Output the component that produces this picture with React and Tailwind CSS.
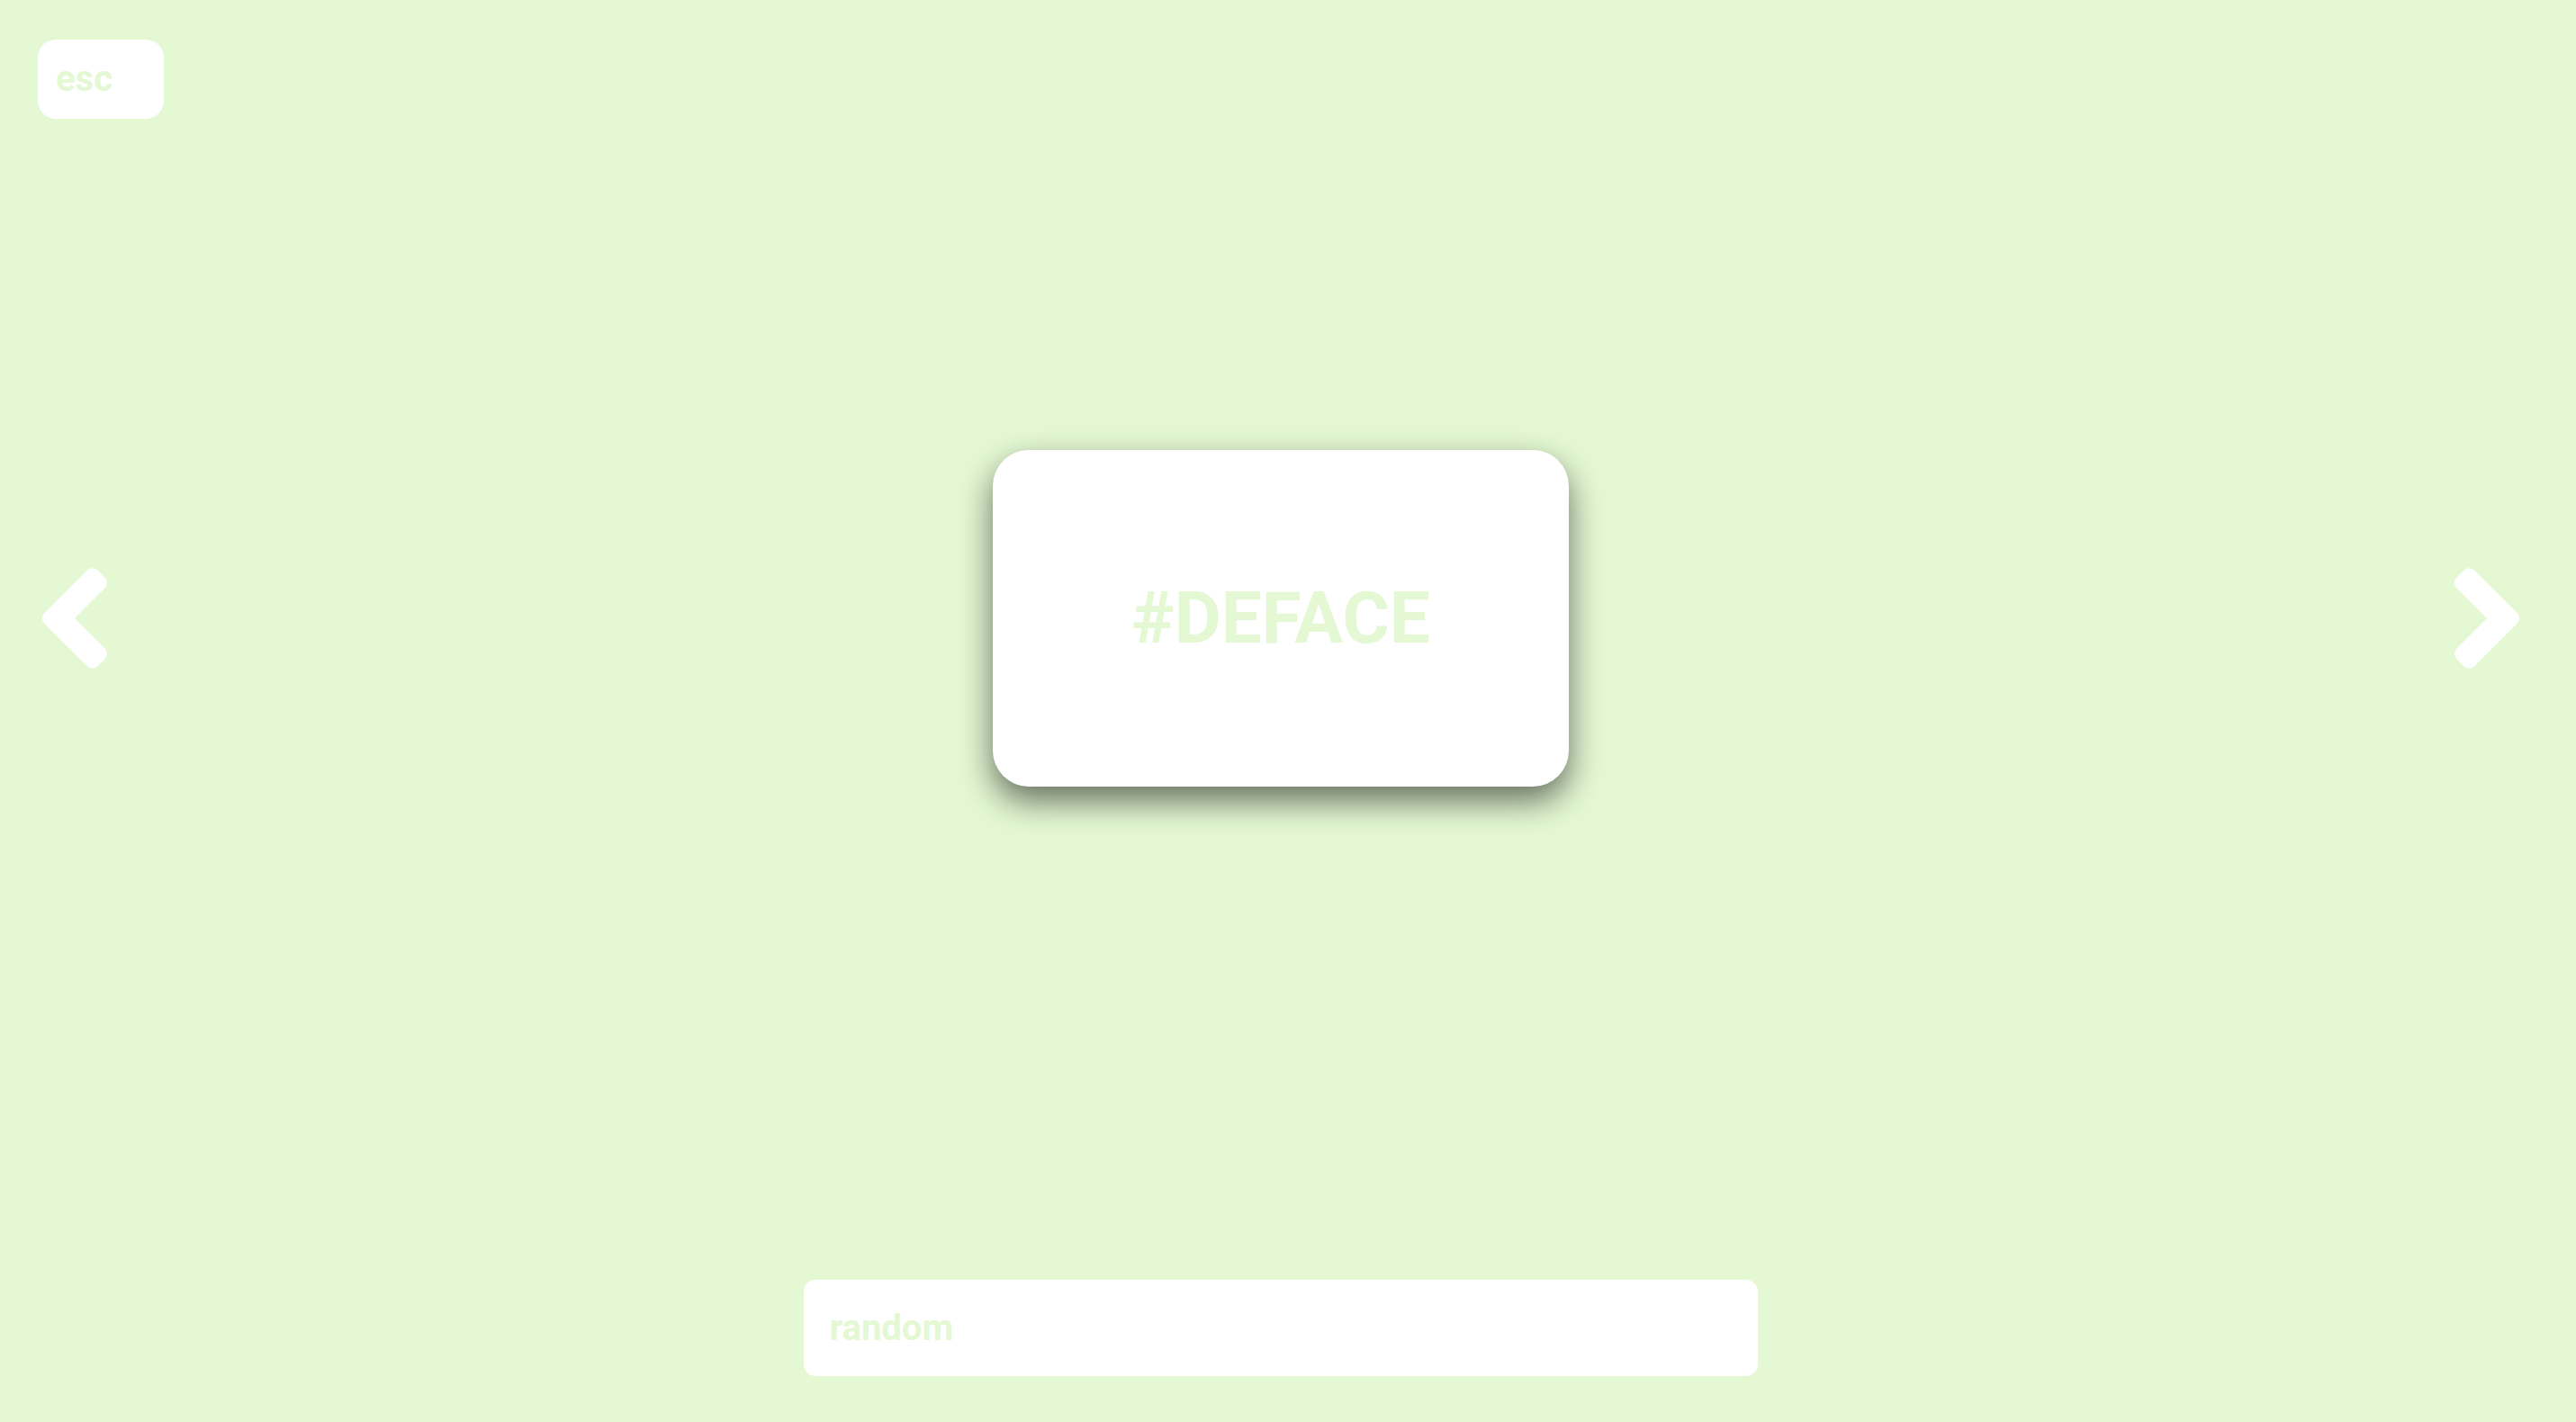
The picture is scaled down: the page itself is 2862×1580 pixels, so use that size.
import React, { useState } from 'react';

// FA5-style "angle" chevrons, viewBox cropped to the ink box
const ChevronLeft = () => (
    <svg viewBox="24.6 96 206.8 320" className="w-[72px] h-[112px] fill-white">
        <path d="M31.7 239l136-136c9.4-9.4 24.6-9.4 33.9 0l22.6 22.6c9.4 9.4 9.4 24.6 0 33.9L127.9 256l96.4 96.4c9.4 9.4 9.4 24.6 0 33.9L201.7 409c-9.4 9.4-24.6 9.4-33.9 0l-136-136c-9.5-9.4-9.5-24.6-.1-34z" />
    </svg>
);

const ChevronRight = () => (
    <svg viewBox="24.6 96 206.8 320" className="w-[72px] h-[112px] fill-white">
        <path d="M224.3 273l-136 136c-9.4 9.4-24.6 9.4-33.9 0l-22.6-22.6c-9.4-9.4-9.4-24.6 0-33.9l96.4-96.4-96.4-96.4c-9.4-9.4-9.4-24.6 0-33.9L54.3 103c9.4-9.4 24.6-9.4 33.9 0l136 136c9.5 9.4 9.5 24.6.1 34z" />
    </svg>
);

const App = () => {
    const [query, setQuery] = useState('random');

    return (
        <div className="h-screen w-full bg-[#e3f8d3] pr-[17px] flex flex-col font-['Roboto',sans-serif] overflow-hidden">
            {/* Header */}
            <div className="h-[132px] pt-[44px] pl-[42px] shrink-0">
                <button className="w-[140px] h-[88px] bg-white rounded-[20px] text-left pl-[20px] text-[40px] font-bold leading-none text-[#e3f8d3]">
                    esc
                </button>
            </div>

            {/* Card + navigation */}
            <div className="flex-1 flex items-center justify-between pl-[47px] pr-[46px]">
                <button><ChevronLeft /></button>
                <div className="w-[640px] h-[374px] bg-white rounded-[40px] shadow-[0_16px_36px_rgba(0,0,0,0.55)] flex items-center justify-center">
                    <span className="text-[80px] font-bold leading-none text-[#e3f8d3]">#DEFACE</span>
                </div>
                <button><ChevronRight /></button>
            </div>

            {/* Search */}
            <div className="mt-[180px] pb-[51px] flex justify-center shrink-0">
                <input
                    value={query}
                    onChange={(e) => setQuery(e.target.value)}
                    className="w-[1060px] h-[107px] bg-white rounded-[13px] pl-[29px] text-[40px] font-bold text-[#e3f8d3] outline-none"
                />
            </div>
        </div>
    );
};

export default App;
